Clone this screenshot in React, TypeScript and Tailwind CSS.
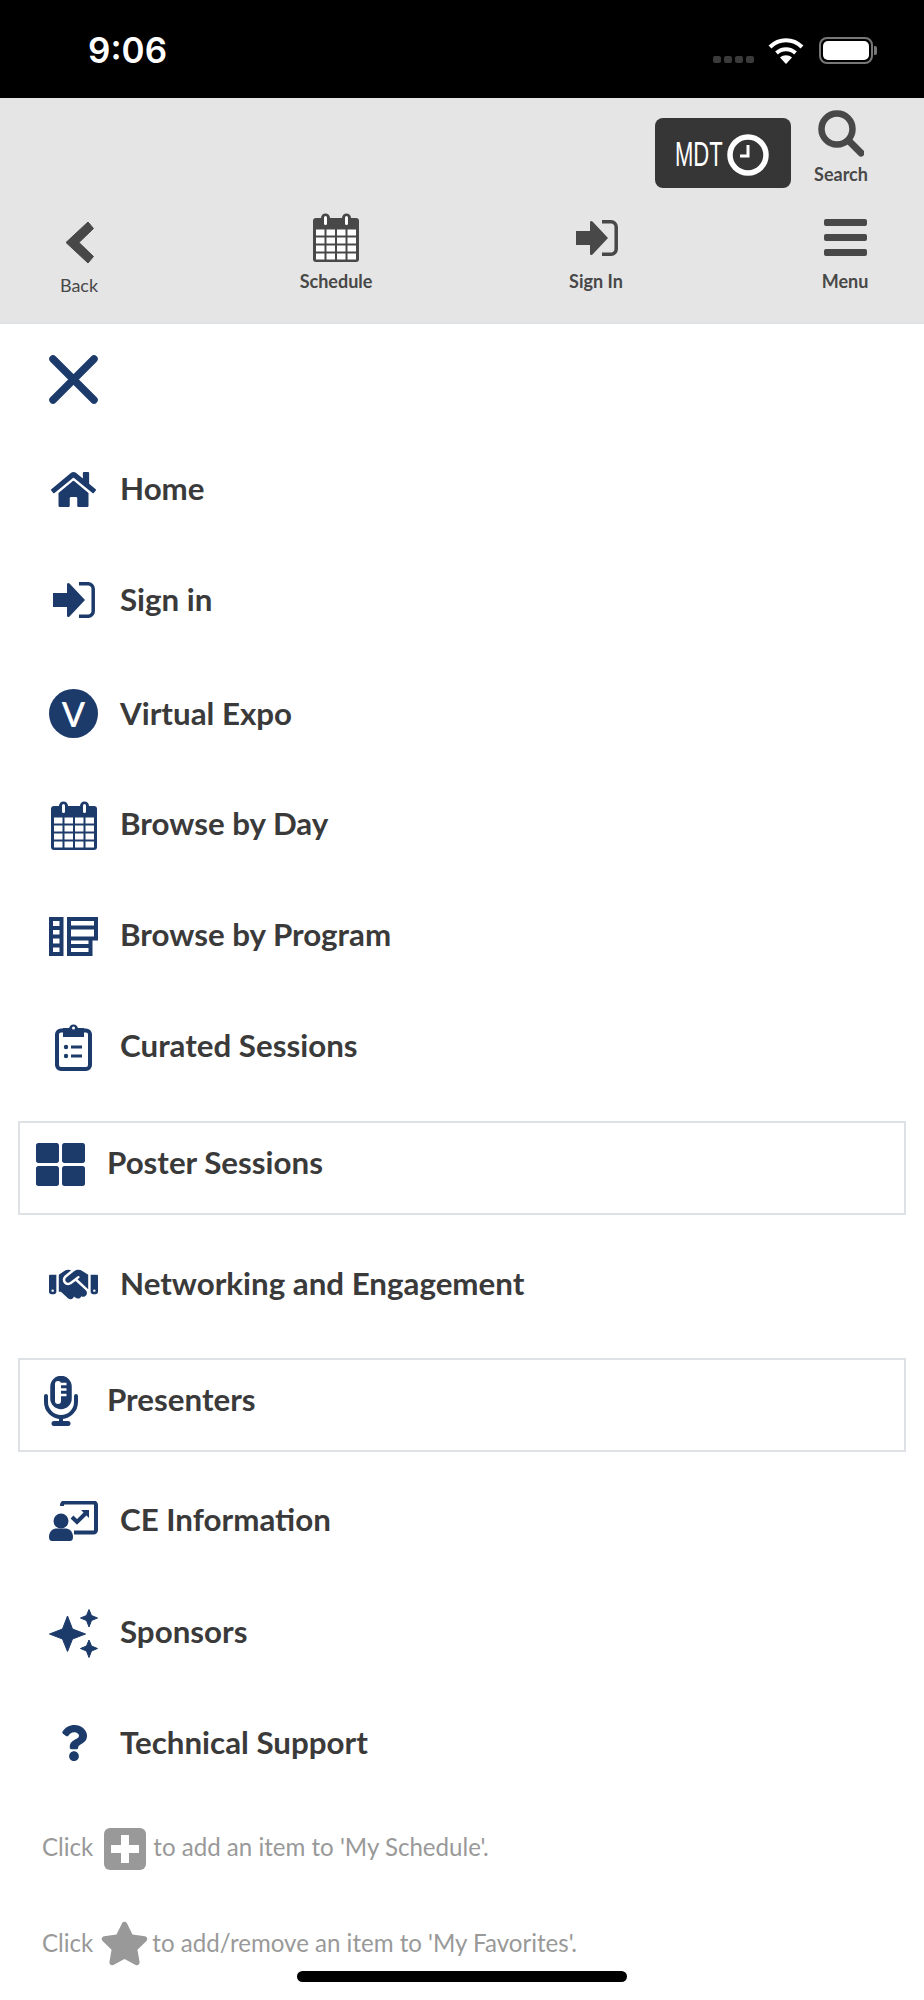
import type { ReactNode } from "react";
import { FaHome, FaThLarge, FaQuestion, FaStar } from "react-icons/fa";
import { FaHandshake } from "react-icons/fa6";

const NAVY = "#1c3a6a";

function CalendarIcon({ color, className }: { color: string; className: string }) {
  return (
    <svg viewBox="0 0 46 49" className={className}>
      <rect x="0" y="5" width="46" height="44" rx="3" fill={color} />
      <rect x="8" y="0.5" width="9" height="14" rx="4.5" fill={color} />
      <rect x="29" y="0.5" width="9" height="14" rx="4.5" fill={color} />
      <rect x="11" y="3" width="3" height="9" rx="1.5" fill="#fff" />
      <rect x="32" y="3" width="3" height="9" rx="1.5" fill="#fff" />
      {[17, 25, 33, 41].map((y) =>
        [3, 13.5, 24, 34.5].map((x) => (
          <rect key={`${x}-${y}`} x={x} y={y - 0.5} width="8.5" height="6" fill="#fff" />
        )),
      )}
    </svg>
  );
}

function SignInIcon({ color, className }: { color: string; className: string }) {
  return (
    <svg viewBox="0 0 43 36" className={className}>
      <path d="M1 11h14V2.500c0-1.500 1.500-2 2.500-1L33 18 17.500 34.500c-1 1-2.500.5-2.500-1V25H1z" fill={color} />
      <path d="M27 1.800h9a5 5 0 0 1 5.200 5v22.400a5 5 0 0 1-5.200 5h-9" fill="none" stroke={color} strokeWidth="3.500" />
    </svg>
  );
}

function ProgramIcon() {
  return (
    <svg viewBox="0 0 49 39" className="w-[49px] h-[39px]" fill="none" stroke={NAVY} strokeWidth="4">
      <path d="M2 2h10.500v35H2zM2 11h10.500M2 19.500h10.500M2 28.500h10.500" />
      <path d="M20 2h27v19.500h-5.500V37H20zM20 10.500h27M20 21.500h21.500M20 29h21.500" />
    </svg>
  );
}

function ClipboardIcon() {
  return (
    <svg viewBox="0 0 37 48" className="w-[37px] h-[48px]">
      <rect x="2" y="7.500" width="33" height="38.500" rx="4" fill="none" stroke={NAVY} strokeWidth="4" />
      <path d="M9 6h6a3.500 3.500 0 0 1 7 0h6v7H9z" fill={NAVY} stroke={NAVY} strokeWidth="2" />
      <circle cx="18.500" cy="5" r="1.500" fill="#fff" />
      <circle cx="11" cy="24" r="2.200" fill={NAVY} />
      <circle cx="11" cy="33" r="2.200" fill={NAVY} />
      <path d="M16 24h11M16 33h11" stroke={NAVY} strokeWidth="3" />
    </svg>
  );
}

function BoardIcon() {
  return (
    <svg viewBox="0 0 49 40" className="w-[49px] h-[40px]">
      <path d="M13 5V4a2.500 2.500 0 0 1 2.500-2.500h29A2.500 2.500 0 0 1 47 4v25a2.500 2.500 0 0 1-2.500 2.500H25" fill="none" stroke={NAVY} strokeWidth="4" />
      <circle cx="12" cy="20" r="7.500" fill={NAVY} />
      <path d="M0 36c0-6 4-8.500 8-8.500h8c4 0 8 2.500 8 8.500 0 2.500-1 4-3 4H3c-2 0-3-1.500-3-4z" fill={NAVY} />
      <path d="M23 16l5 5 10-10" fill="none" stroke={NAVY} strokeWidth="4" />
      <path d="M32 9h8v8z" fill={NAVY} />
    </svg>
  );
}

function MicIcon() {
  return (
    <svg viewBox="0 0 34 50" className="w-[34px] h-[50px]" fill="none" stroke={NAVY}>
      <rect x="8" y="1.500" width="18" height="30" rx="9" strokeWidth="3.500" fill={NAVY} />
      <path d="M17 8h5.500M17 13.500h5.500M17 19h5.500" stroke="#fff" strokeWidth="2.500" />
      <rect x="11" y="5" width="6" height="23" rx="3" fill="#fff" stroke="none" />
      <path d="M2 20v6a15 15 0 0 0 30 0v-6" strokeWidth="4" strokeLinecap="round" />
      <path d="M17 41v6" strokeWidth="4" />
      <path d="M10 47.500h14" strokeWidth="5" strokeLinecap="round" />
    </svg>
  );
}

function SparklesIcon() {
  return (
    <svg viewBox="0 0 49 49" className="w-[49px] h-[49px]" fill={NAVY} stroke={NAVY} strokeWidth="1" strokeLinejoin="round">
      <path d="M18.500 7l5 13 13 5-13 5-5 12.500-5-12.500L.5 25l13-5z" />
      <path d="M40 .5l2.500 6 6 2.500-6 2.500-2.500 6.500-2.500-6.500-6-2.500 6-2.500z" />
      <path d="M40 31l2.500 6 6 2.500-6 2.500-2.500 6.500-2.500-6.500-6-2.500 6-2.500z" />
    </svg>
  );
}

function MenuRow({
  icon,
  label,
  className,
  labelClass = "pb-[2px]",
}: {
  icon: ReactNode;
  label: string;
  className: string;
  labelClass?: string;
}) {
  return (
    <div className={`flex items-center pl-[49px] ${className}`}>
      <div className="w-[49px] flex items-center justify-center shrink-0">{icon}</div>
      <span className={`ml-[22px] text-[31.3px] font-bold text-[#3a3a3a] ${labelClass}`}>{label}</span>
    </div>
  );
}

function BoxRow({ icon, label, className }: { icon: ReactNode; label: string; className: string }) {
  return (
    <div className={`flex items-center h-[94px] mx-[18px] pl-[16px] pb-[8px] border-2 border-[#dee2e6] ${className}`}>
      <div className="w-[49px] flex items-center justify-center shrink-0">{icon}</div>
      <span className="ml-[22px] pb-[3px] text-[31.3px] font-bold text-[#3a3a3a]">{label}</span>
    </div>
  );
}

function NavItem({
  icon,
  label,
  className,
  labelClass = "mt-[7px] font-bold",
}: {
  icon: ReactNode;
  label: string;
  className: string;
  labelClass?: string;
}) {
  return (
    <div className={`w-[80px] flex flex-col items-center ${className}`}>
      <div className="h-[49px] flex items-center justify-center">{icon}</div>
      <span className={`text-[18px] leading-[24px] text-[#484848] ${labelClass}`}>{label}</span>
    </div>
  );
}

export default function App() {
  return (
    <div className="relative w-[924px] h-[2000px] overflow-hidden bg-white font-['Lato',sans-serif]">
      {/* Status bar */}
      <div className="h-[98px] bg-black flex items-start">
        <span className="ml-[88px] mt-[28px] text-[35px] font-semibold leading-[44px] text-white font-['Inter',sans-serif]">
          9:06
        </span>
        <div className="ml-auto mr-[47px] mt-[37px] flex items-start">
          <div className="mt-[19px] flex gap-[3px]">
            <div className="w-[8px] h-[7px] rounded-[2px] bg-[#3a3a3a]" />
            <div className="w-[8px] h-[7px] rounded-[2px] bg-[#3a3a3a]" />
            <div className="w-[8px] h-[7px] rounded-[2px] bg-[#3a3a3a]" />
            <div className="w-[8px] h-[7px] rounded-[2px] bg-[#3a3a3a]" />
          </div>
          <svg viewBox="0 0 36 27" className="ml-[14px] w-[36px] h-[27px]" fill="none" stroke="#fff">
            <path d="M2 10c9-9 23-9 32 0" strokeWidth="4" />
            <path d="M8.500 16c5.500-5 13.500-5 19 0" strokeWidth="4" />
            <path d="M12 20.500c3.500-3 8.500-3 12 0L18 27z" fill="#fff" stroke="none" />
          </svg>
          <div className="ml-[15px] flex items-center">
            <div className="w-[54px] h-[27px] rounded-[8px] border-2 border-[#777] p-[2px]">
              <div className="w-full h-full rounded-[5px] bg-white" />
            </div>
            <div className="ml-[1px] w-[3px] h-[9px] rounded-r-[2px] bg-[#777]" />
          </div>
        </div>
      </div>

      {/* Header */}
      <div className="h-[226px] bg-[#e5e5e5] border-b-2 border-[#dfe2e5]">
        <div className="h-[98px] flex items-start justify-end">
          <div className="mt-[20px] w-[136px] h-[70px] rounded-[8px] bg-[#363636] flex items-center pl-[20px]">
            <span className="w-[47px] text-[35px] leading-none text-white font-['Liberation_Sans',sans-serif] scale-x-[0.63] origin-left">
              MDT
            </span>
            <svg viewBox="0 0 42 42" className="ml-[5px] mt-[4px] w-[42px] h-[42px]" fill="none" stroke="#fff">
              <circle cx="21" cy="21" r="18" strokeWidth="5.500" />
              <path d="M21 11v11h-8" strokeWidth="3" />
            </svg>
          </div>
          <div className="ml-[27px] mr-[60px] mt-[12px] w-[46px] flex flex-col items-center">
            <svg viewBox="0 0 46 47" className="w-[46px] h-[47px]" fill="none" stroke="#484848" strokeLinecap="round">
              <circle cx="19" cy="19" r="15.500" strokeWidth="6.500" />
              <path d="M31 31l12 12" strokeWidth="7" />
            </svg>
            <span className="mt-[5px] text-[18px] font-bold leading-[24px] text-[#484848] whitespace-nowrap">Search</span>
          </div>
        </div>
        <div className="flex items-start">
          <NavItem
            className="ml-[39px] mt-[22px]"
            label="Back"
            labelClass="mt-[6px] font-normal"
            icon={
              <svg viewBox="0 0 29 43" className="w-[29px] h-[43px]" fill="#484848" stroke="#484848" strokeWidth="1" strokeLinejoin="round">
                <path d="M23 1l5.500 6.500-14.500 14 14.500 14L23 42 1 21.500z" />
              </svg>
            }
          />
          <NavItem
            className="ml-[177px] mt-[17px]"
            label="Schedule"
            icon={<CalendarIcon color="#484848" className="w-[46px] h-[49px]" />}
          />
          <NavItem
            className="ml-[180px] mt-[17px]"
            label="Sign In"
            icon={<SignInIcon color="#484848" className="w-[43px] h-[36px]" />}
          />
          <NavItem
            className="ml-[169px] mt-[17px]"
            label="Menu"
            icon={
              <div className="w-[43px] flex flex-col gap-[8px]">
                <div className="h-[7px] rounded-[2px] bg-[#484848]" />
                <div className="h-[7px] rounded-[2px] bg-[#484848]" />
                <div className="h-[7px] rounded-[2px] bg-[#484848]" />
              </div>
            }
          />
        </div>
      </div>

      {/* Menu */}
      <div className="h-[110px] flex items-center pl-[49px]">
        <svg viewBox="0 0 49 49" className="w-[49px] h-[49px]" fill="none" stroke={NAVY} strokeWidth="7.500" strokeLinecap="round">
          <path d="M4 4l41 41M45 4L4 45" />
        </svg>
      </div>
      <MenuRow className="h-[110px]" label="Home" icon={<FaHome size={45} color={NAVY} />} />
      <MenuRow className="h-[112px]" label="Sign in" icon={<SignInIcon color={NAVY} className="w-[43px] h-[36px]" />} />
      <MenuRow
        className="h-[114px]"
        label="Virtual Expo"
        labelClass=""
        icon={
          <div className="w-[49px] h-[49px] rounded-full bg-[#1c3a6a] flex items-center justify-center text-[34px] font-semibold text-white">
            V
          </div>
        }
      />
      <MenuRow className="h-[111px]" label="Browse by Day" labelClass="pb-[5px]" icon={<CalendarIcon color={NAVY} className="w-[46px] h-[49px]" />} />
      <MenuRow className="h-[111px]" label="Browse by Program" labelClass="pb-[5px]" icon={<ProgramIcon />} />
      <MenuRow className="h-[110px]" label="Curated Sessions" labelClass="pb-[3px]" icon={<ClipboardIcon />} />
      <BoxRow className="mt-[19px]" label="Poster Sessions" icon={<FaThLarge size={49} color={NAVY} />} />
      <MenuRow className="h-[143px] pb-[5px]" label="Networking and Engagement" icon={<FaHandshake size={49} color={NAVY} />} />
      <BoxRow label="Presenters" icon={<MicIcon />} />
      <MenuRow className="h-[137px]" label="CE Information" icon={<BoardIcon />} />
      <MenuRow className="h-[88px]" label="Sponsors" labelClass="pb-[4px]" icon={<SparklesIcon />} />
      <MenuRow className="h-[132px]" label="Technical Support" icon={<FaQuestion size={36} color={NAVY} />} />

      {/* Help text */}
      <div className="pl-[42px] text-[24.1px] text-[#999999]">
        <div className="h-[43px] mt-[18px] flex items-center">
          <span className="pb-[3px]">Click</span>
          <div className="ml-[11px] w-[42px] h-[42px] rounded-[6px] bg-[#999999] flex items-center justify-center">
            <svg viewBox="0 0 28 28" className="w-[28px] h-[28px]" fill="#fff">
              <path d="M10 0h8v10h10v8H18v10h-8V18H0v-8h10z" />
            </svg>
          </div>
          <span className="ml-[7px] pb-[3px]">to add an item to 'My Schedule'.</span>
        </div>
        <div className="h-[43px] mt-[52px] flex items-center">
          <span>Click</span>
          <FaStar size={49} color="#999999" className="ml-[7px]" />
          <span className="ml-[3px]">to add/remove an item to 'My Favorites'.</span>
        </div>
      </div>

      {/* Home indicator */}
      <div className="absolute left-[297px] top-[1971px] w-[330px] h-[11px] rounded-full bg-black" />
    </div>
  );
}
